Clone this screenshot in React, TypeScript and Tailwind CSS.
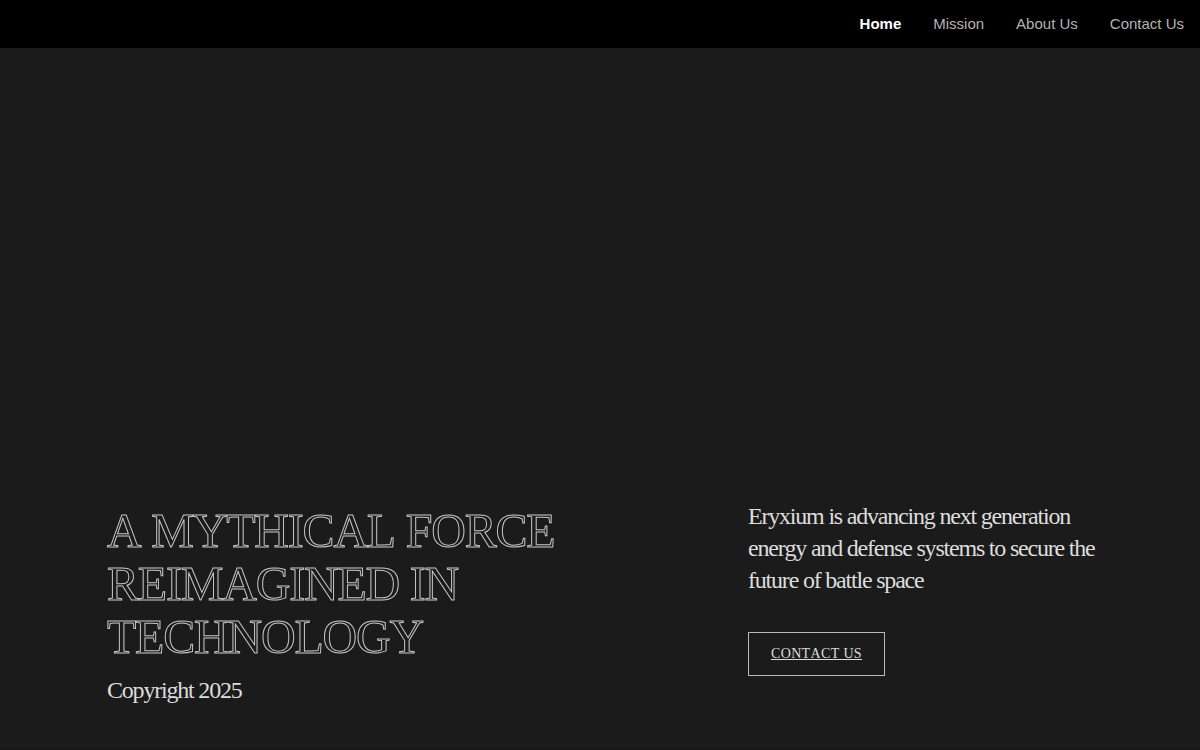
const navLinks = [
  { label: 'Home', href: '#home', active: true },
  { label: 'Mission', href: '#mission', active: false },
  { label: 'About Us', href: '#about', active: false },
  { label: 'Contact Us', href: '#contact', active: false },
]

function NavBar() {
  return (
    <header className="bg-black">
      <nav
        aria-label="Main"
        className="flex h-12 items-center justify-end gap-8 px-4 font-['Liberation_Sans',Arial,sans-serif] text-[15px]"
      >
        {navLinks.map((link) => (
          <a
            key={link.href}
            href={link.href}
            aria-current={link.active ? 'page' : undefined}
            className={link.active ? 'font-bold text-white' : 'text-[#b3b3b3] hover:text-white'}
          >
            {link.label}
          </a>
        ))}
      </nav>
    </header>
  )
}

function Hero() {
  return (
    <main className="flex flex-1 items-end justify-between gap-8 pr-24 pb-[42px] pl-[107px] text-2xl tracking-tighter text-[#dddddd] [font-kerning:none]">
      <div className="max-w-[500px]">
        <h1 className="text-5xl leading-[53px] text-transparent uppercase will-change-transform [-webkit-text-stroke:1px_#c4c4c4]">
          A mythical force reimagined in technology
        </h1>
        <p className="mt-[11px]">Copyright 2025</p>
      </div>
      <div className="w-[356px] pb-[30px]">
        <p>Eryxium is advancing next generation energy and defense systems to secure the future of battle space</p>
        <a
          href="#contact"
          className="mt-9 inline-flex h-11 items-center border border-[#b8b8b8] px-[22px] text-sm tracking-wide uppercase underline"
        >
          Contact Us
        </a>
      </div>
    </main>
  )
}

export default function App() {
  return (
    <div className="flex min-h-screen flex-col border-b-2 border-[#171717] bg-[#1b1b1b] font-['Liberation_Serif','Times_New_Roman',serif]">
      <NavBar />
      <Hero />
    </div>
  )
}
